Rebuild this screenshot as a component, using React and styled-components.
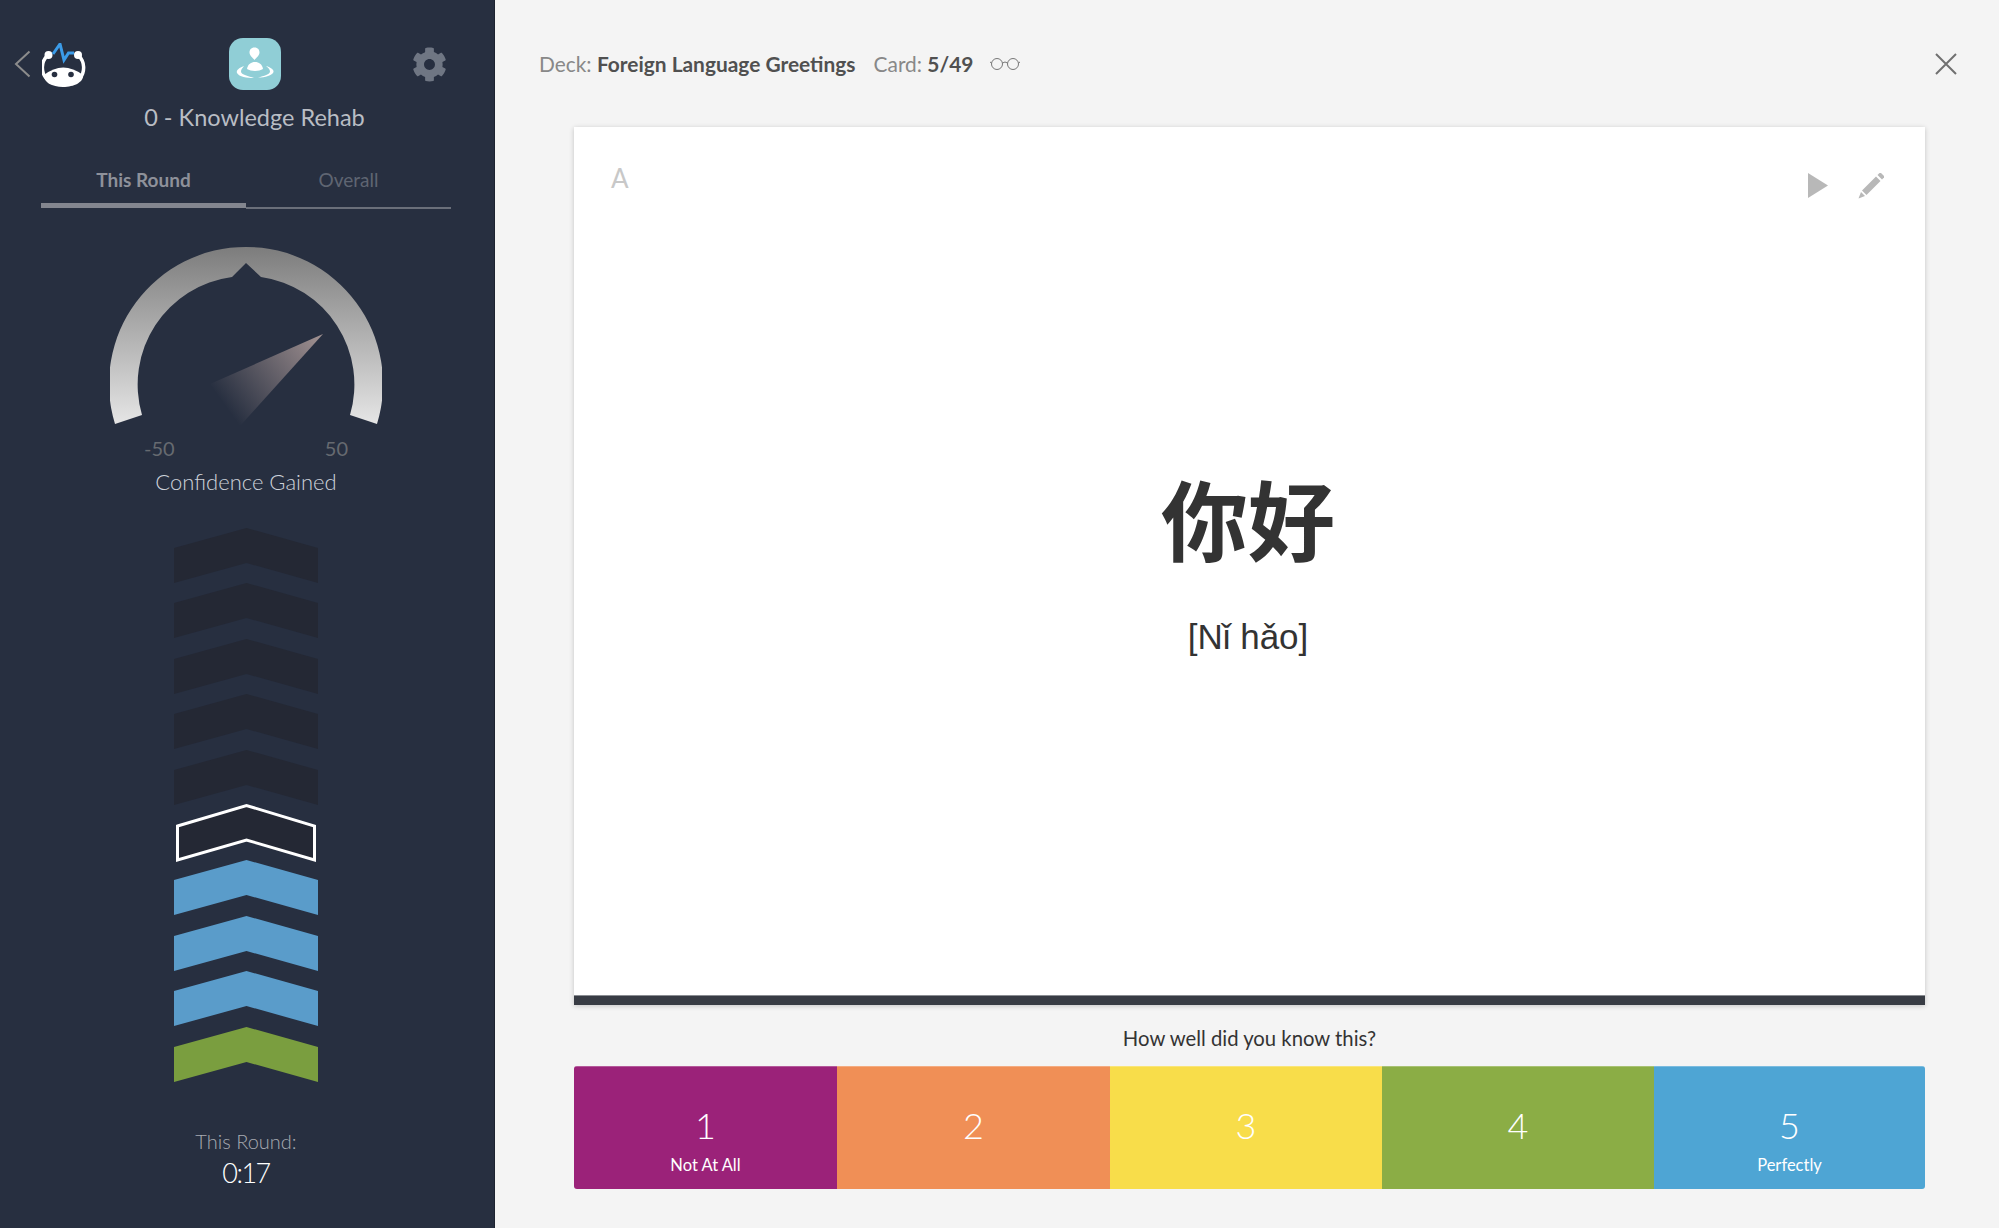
import React from "react";
import styled, { createGlobalStyle } from "styled-components";
import { FaCog } from "react-icons/fa";

const GlobalStyle = createGlobalStyle`
  html, body {
    margin: 0;
    padding: 0;
    background: #f4f4f4;
  }
  body {
    font-family: "Lato", "Noto Sans", sans-serif;
    overflow: hidden;
  }
`;

const Page = styled.div`
  display: flex;
  width: 1999px;
  height: 1228px;
`;

const Sidebar = styled.aside`
  width: 495px;
  flex: none;
  display: flex;
  flex-direction: column;
  background: #272f40;
  border-right: 1px solid #1d2330;
  box-sizing: border-box;
`;

const TopBar = styled.div`
  display: flex;
  align-items: center;
  height: 52px;
  margin-top: 38px;
  padding-left: 14px;
`;

const BackIcon = styled.svg`
  width: 17px;
  height: 28px;
  flex: none;
`;

const LogoIcon = styled.svg`
  width: 44px;
  height: 46px;
  margin-left: 11px;
  margin-top: 4px;
  flex: none;
`;

const AppIcon = styled.svg`
  width: 52px;
  height: 52px;
  margin-left: 143px;
  flex: none;
`;

const GearButton = styled.span`
  display: inline-flex;
  margin-left: 131px;
  color: #6f7683;
  font-size: 35px;
`;

const DeckTitle = styled.div`
  margin-top: 12px;
  padding-left: 15px;
  font-size: 23.5px;
  line-height: 30px;
  color: #b9bdc4;
  text-align: center;
`;

const SideBody = styled.div`
  width: 492px;
  display: flex;
  flex-direction: column;
  align-items: center;
`;

const Tabs = styled.div`
  display: grid;
  grid-template-columns: 205px 205px;
  align-items: start;
  margin-top: 28px;
  height: 49px;
`;

const Tab = styled.div`
  box-sizing: border-box;
  height: ${(p) => (p.$active ? "48px" : "49px")};
  line-height: 40px;
  text-align: center;
  font-size: 19px;
  font-weight: ${(p) => (p.$active ? 700 : 400)};
  color: ${(p) => (p.$active ? "#8e919a" : "#5f6572")};
  border-bottom: ${(p) => (p.$active ? "5px solid #83868f" : "2px solid #6a6f7a")};
`;

const GaugeSvg = styled.svg`
  display: block;
  width: 272px;
  height: 190px;
  margin-top: 32px;
`;

const GaugeScale = styled.div`
  display: flex;
  justify-content: space-between;
  width: 204px;
  margin-top: 6px;
  font-size: 20px;
  line-height: 22px;
  color: #666a70;
`;

const GaugeLabel = styled.div`
  margin-top: 10px;
  font-size: 22px;
  font-weight: 300;
  line-height: 26px;
  color: #cdd2da;
`;

const ChevronStack = styled.div`
  display: flex;
  flex-direction: column;
  gap: 0.4px;
  margin-top: 33px;
`;

const ChevronSvg = styled.svg`
  display: block;
  width: 144px;
  height: 55px;
  overflow: visible;
`;

const RoundLabel = styled.div`
  margin-top: 46px;
  font-size: 20px;
  font-weight: 300;
  line-height: 26px;
  color: #a7abb2;
`;

const RoundTime = styled.div`
  margin-top: 2px;
  font-size: 27px;
  font-weight: 300;
  letter-spacing: -1.5px;
  line-height: 34px;
  color: #fff;
`;

const Main = styled.main`
  flex: 1;
  display: flex;
  flex-direction: column;
  min-width: 0;
`;

const Header = styled.header`
  height: 127px;
  display: flex;
  align-items: center;
  padding: 0 42px 0 44px;
  box-sizing: border-box;
  font-size: 20.9px;
  color: #888;
`;

const Strong = styled.b`
  font-weight: 700;
  color: #505050;
`;

const CardCount = styled.span`
  margin-left: 18px;
`;

const GlassesIcon = styled.svg`
  width: 31px;
  height: 14px;
  margin-left: 17px;
`;

const CloseIcon = styled.svg`
  width: 22px;
  height: 22px;
  margin-left: auto;
`;

const Center = styled.div`
  margin: 0 74px 0 79px;
`;

const Card = styled.section`
  height: 878px;
  display: flex;
  flex-direction: column;
  background: #fff;
  box-shadow: 0 1px 5px rgba(0, 0, 0, 0.2);
`;

const CardFace = styled.div`
  flex: 1;
  padding: 41px 40px 0 37px;
  display: flex;
  flex-direction: column;
`;

const CardTools = styled.div`
  height: 35px;
  display: flex;
  align-items: center;
  gap: 30px;
`;

const SideLetter = styled.span`
  margin-right: auto;
  margin-bottom: 16px;
  font-size: 26px;
  color: #c8c8c8;
`;

const ToolIcon = styled.svg`
  display: block;
  width: ${(p) => p.$w}px;
  height: ${(p) => p.$h}px;
  fill: #b8b8b8;
`;

const Term = styled.div`
  margin-top: 264px;
  text-align: center;
  font-family: "Noto Sans CJK SC", "Noto Sans CJK TC", sans-serif;
  font-size: 87px;
  font-weight: 700;
  line-height: 100px;
  color: #333;
`;

const Reading = styled.div`
  margin-top: 50px;
  text-align: center;
  font-family: "Liberation Sans", Arial, sans-serif;
  font-size: 35px;
  line-height: 40px;
  color: #333;
`;

const ProgressBar = styled.div`
  height: 9px;
  background: #383c44;
  border-top: 1px solid #8a8d92;
`;

const Prompt = styled.div`
  margin-top: 21px;
  text-align: center;
  font-size: 20.3px;
  line-height: 24px;
  color: #333;
`;

const Ratings = styled.div`
  display: grid;
  grid-template-columns: 263px 273px 272px 272px 271px;
  height: 123px;
  margin-top: 16px;
  border-radius: 3px;
  overflow: hidden;
`;

const Rating = styled.button`
  display: flex;
  flex-direction: column;
  justify-content: flex-start;
  align-items: center;
  padding: 38px 0 0;
  margin: 0;
  border: 0;
  border-top: 1px solid rgba(255, 255, 255, 0.25);
  box-sizing: border-box;
  font-family: inherit;
  color: #fff;
  background: ${(p) => p.$color};
`;

const RatingNumber = styled.div`
  font-size: 36px;
  font-weight: 300;
  line-height: 40px;
`;

const RatingText = styled.div`
  margin-top: 9px;
  font-size: 16.5px;
  line-height: 22px;
`;

const ratings = [
  { value: 1, text: "Not At All", color: "#9b2279" },
  { value: 2, color: "#f08f56" },
  { value: 3, color: "#f8dd4a" },
  { value: 4, color: "#8bad45" },
  { value: 5, text: "Perfectly", color: "#4ea5d4" },
];

const chevrons = [
  "#242834", "#242834", "#242834", "#242834", "#242834",
  "current", "#5a9cca", "#5a9cca", "#5a9cca", "#7a9e3f",
];

const Chevron = ({ color }) => (
  <ChevronSvg viewBox="0 0 144 55">
    {color === "current" ? (
      <polygon
        points="3.5,21 72.5,0.5 140.5,21 140.5,55 72.5,35 3.5,55"
        fill="#242834"
        stroke="#fff"
        strokeWidth="3"
      />
    ) : (
      <polygon points="0,20 72.5,0 144,20 144,55 72.5,35 0,55" fill={color} />
    )}
  </ChevronSvg>
);

const Gauge = () => (
  <GaugeSvg viewBox="110 240 272 190">
    <defs>
      <linearGradient id="gaugeArc" x1="0" y1="247" x2="0" y2="424" gradientUnits="userSpaceOnUse">
        <stop offset="0" stopColor="#7d7d7d" />
        <stop offset="1" stopColor="#e6e6e6" />
      </linearGradient>
      <linearGradient id="gaugeNeedle" x1="323" y1="333" x2="225" y2="405" gradientUnits="userSpaceOnUse">
        <stop offset="0" stopColor="#a39393" />
        <stop offset="1" stopColor="#a39393" stopOpacity="0" />
      </linearGradient>
    </defs>
    <path
      d="M115 423 A137 137 0 1 1 377 423 L350 414 A108.5 108.5 0 0 0 261 276 L246 262 L232 276 A108.5 108.5 0 0 0 142 414 Z"
      fill="url(#gaugeArc)"
    />
    <polygon points="323,333 210,383 240,425" fill="url(#gaugeNeedle)" />
  </GaugeSvg>
);

const Logo = () => (
  <LogoIcon viewBox="42 43 44 46">
    <path d="M47 56 C41 62 41 72 46 78 M79 56 C85 62 85 72 80 78" stroke="#fff" strokeWidth="3.5" fill="none" />
    <circle cx="48.5" cy="55" r="4" fill="#fff" />
    <circle cx="78" cy="55" r="4" fill="#fff" />
    <path d="M44 75 Q63 60 83 75 C84 82 74 87 63 87 C52 87 43 82 44 75 Z" fill="#fff" />
    <circle cx="54.5" cy="74.5" r="2.8" fill="#272f40" />
    <circle cx="71" cy="74.5" r="2.8" fill="#272f40" />
    <path d="M53 54 L60 44 L64 60 L68.5 53 L74 53" stroke="#3b9be8" strokeWidth="3" fill="none" />
  </LogoIcon>
);

const App = () => (
  <Page>
    <GlobalStyle />
    <Sidebar>
      <TopBar>
        <BackIcon viewBox="0 0 17 28">
          <path d="M15.5 1.5 L2 14 L15.5 26.5" stroke="#8c8c8c" strokeWidth="2" fill="none" />
        </BackIcon>
        <Logo />
        <AppIcon viewBox="0 0 52 52">
          <rect width="52" height="52" rx="14" fill="#90ced6" />
          <path d="M25.5 9.5 C29 9.5 30.5 12 30.5 14.5 C30.5 17.5 27.5 19.5 25.5 22 C23.5 19.5 20.5 17.5 20.5 14.5 C20.5 12 22 9.5 25.5 9.5 Z" fill="#fff" />
          <path d="M18 31 C19 26 22 24 26 24 C30 24 33 26 34 31 C30 33.5 22 33.5 18 31 Z" fill="#fff" />
          <path d="M15 28 C10 30 7 32 8 35 C10 39 18 40 25 40 C20 38 12 37 12 33.5 C12 31.5 13.5 30 15 28 Z" fill="#fff" />
          <path d="M37 28 C42 29.5 45 31.5 44.5 34 C43.5 37.5 36 39.5 29 39.5 C35 38 41 36.5 41 33.5 C41 31.5 39 29.5 37 28 Z" fill="#fff" />
        </AppIcon>
        <GearButton>
          <FaCog />
        </GearButton>
      </TopBar>
      <DeckTitle>0 - Knowledge Rehab</DeckTitle>
      <SideBody>
        <Tabs>
          <Tab $active>This Round</Tab>
          <Tab>Overall</Tab>
        </Tabs>
        <Gauge />
        <GaugeScale>
          <span>-50</span>
          <span>50</span>
        </GaugeScale>
        <GaugeLabel>Confidence Gained</GaugeLabel>
        <ChevronStack>
          {chevrons.map((color, i) => (
            <Chevron key={i} color={color} />
          ))}
        </ChevronStack>
        <RoundLabel>This Round:</RoundLabel>
        <RoundTime>0:17</RoundTime>
      </SideBody>
    </Sidebar>
    <Main>
      <Header>
        <span>
          Deck: <Strong>Foreign Language Greetings</Strong>
        </span>
        <CardCount>
          Card: <Strong>5/49</Strong>
        </CardCount>
        <GlassesIcon viewBox="0 0 31 14">
          <g fill="none" stroke="#777" strokeWidth="1">
            <circle cx="7" cy="7" r="5.5" />
            <circle cx="23" cy="7" r="5.5" />
            <path d="M12.5 6 Q15 4 17.5 6 M1.5 6 L0 5 M28.5 6 L30 5" />
          </g>
        </GlassesIcon>
        <CloseIcon viewBox="0 0 22 22">
          <path d="M1 1 L21 21 M21 1 L1 21" stroke="#707070" strokeWidth="2" fill="none" />
        </CloseIcon>
      </Header>
      <Center>
        <Card>
          <CardFace>
            <CardTools>
              <SideLetter>A</SideLetter>
              <ToolIcon $w={20} $h={25} viewBox="0 0 20 25">
                <polygon points="0,0 20,12.5 0,25" />
              </ToolIcon>
              <ToolIcon $w={27} $h={27} viewBox="0 0 27 27">
                <polygon points="4,18.5 18,4.5 22.5,9 8.5,23" />
                <polygon points="19.5,3 21.5,1 23,1 26,4 26,5.5 24,7.5" />
                <polygon points="3,20 7,24 0.5,26.5" />
              </ToolIcon>
            </CardTools>
            <Term>你好</Term>
            <Reading>[Nǐ hǎo]</Reading>
          </CardFace>
          <ProgressBar />
        </Card>
        <Prompt>How well did you know this?</Prompt>
        <Ratings>
          {ratings.map((r) => (
            <Rating key={r.value} $color={r.color}>
              <RatingNumber>{r.value}</RatingNumber>
              {r.text && <RatingText>{r.text}</RatingText>}
            </Rating>
          ))}
        </Ratings>
      </Center>
    </Main>
  </Page>
);

export default App;
